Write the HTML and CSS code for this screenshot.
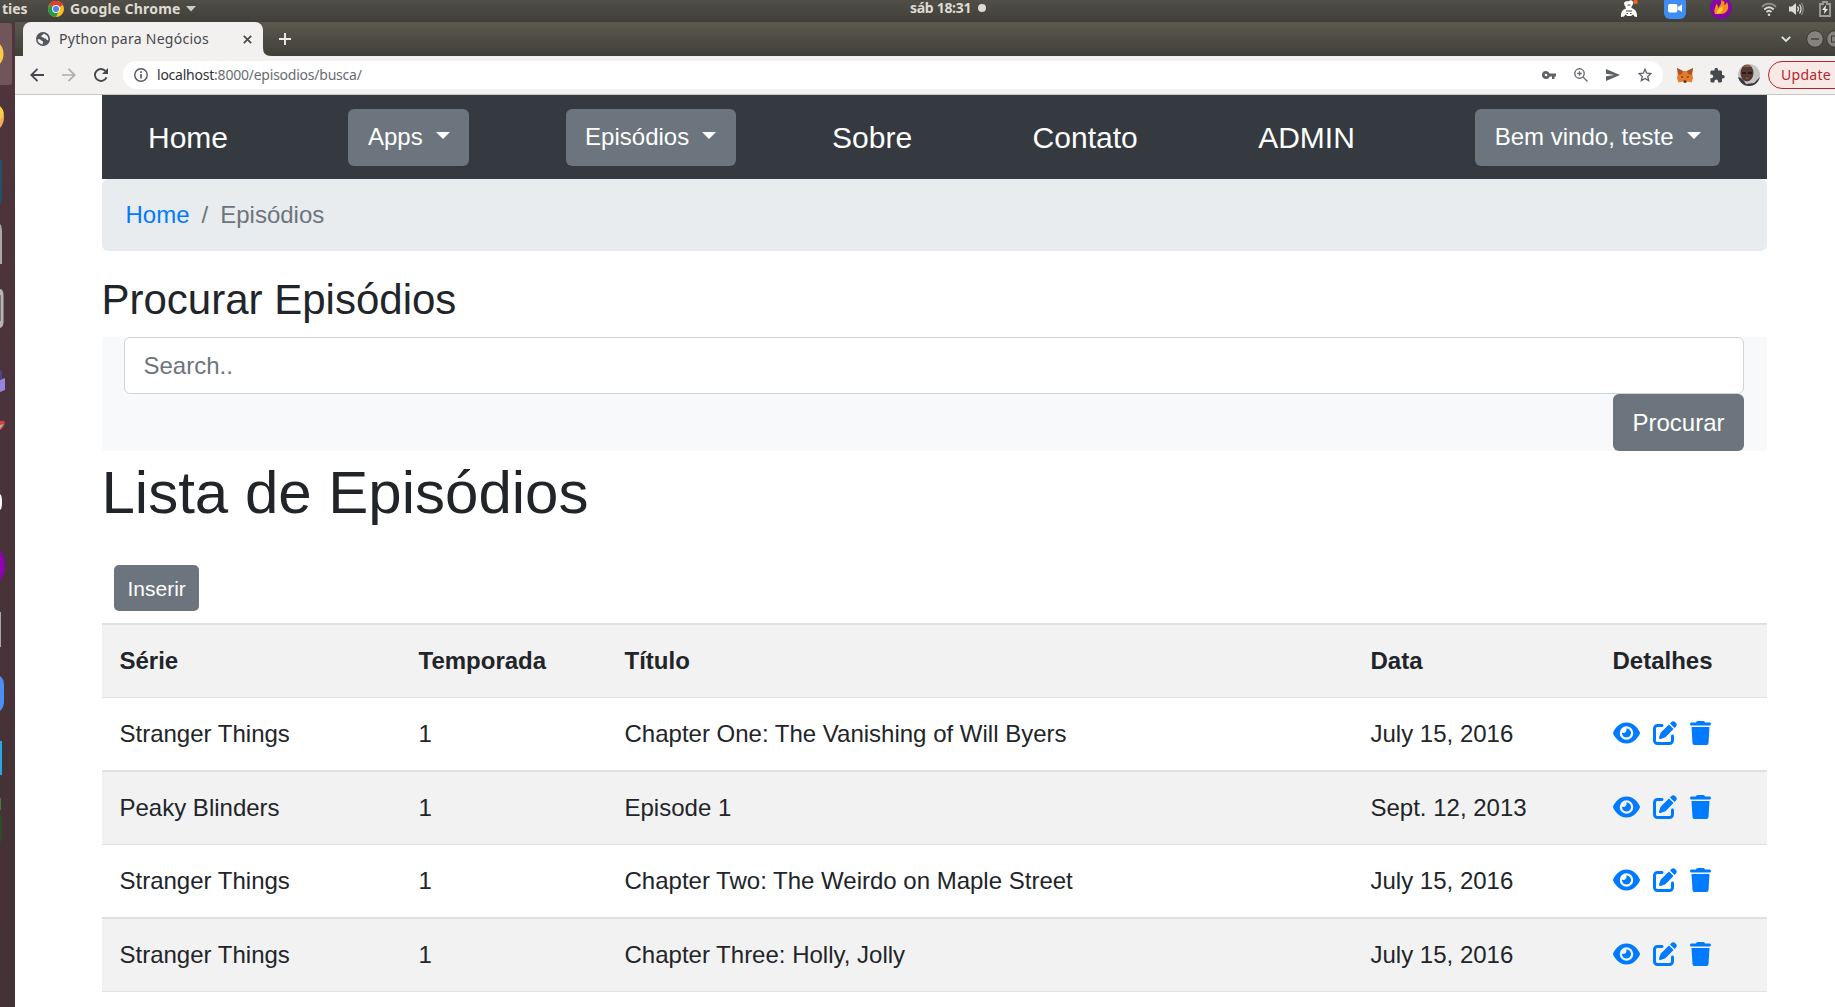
FILE: index.html
```html
<!DOCTYPE html>
<html lang="pt-br">
<head>
<meta charset="utf-8">
<title>Python para Negócios</title>
<link rel="stylesheet" href="styles.css">
</head>
<body>
<svg class="defs" width="0" height="0" aria-hidden="true">
  <symbol id="eye" viewBox="0 0 576 512"><path d="M288 32c-80.8 0-145.5 36.8-192.6 80.6C48.6 156 17.3 208 2.5 243.7c-3.3 7.9-3.3 16.7 0 24.6C17.3 304 48.6 356 95.4 399.4C142.5 443.2 207.2 480 288 480s145.5-36.8 192.6-80.6c46.8-43.5 78.1-95.4 93-131.1c3.3-7.9 3.3-16.7 0-24.6c-14.9-35.7-46.2-87.7-93-131.1C433.5 68.8 368.8 32 288 32zM144 256a144 144 0 1 1 288 0 144 144 0 1 1 -288 0zm144-64c0 35.3-28.7 64-64 64c-7.1 0-13.9-1.2-20.3-3.3c-5.5-1.8-11.9 1.6-11.7 7.4c.3 6.9 1.3 13.8 3.2 20.7c13.7 51.2 66.4 81.6 117.6 67.9s81.6-66.4 67.9-117.6c-11.1-41.5-47.8-69.4-88.6-71.1c-5.8-.2-9.2 6.1-7.4 11.7c2.1 6.4 3.3 13.2 3.3 20.3z"/></symbol>
  <symbol id="edit" viewBox="0 0 512 512"><path d="M471.6 21.7c-21.9-21.9-57.3-21.9-79.2 0L362.3 51.7l97.9 97.9 30.1-30.1c21.9-21.9 21.9-57.3 0-79.2L471.6 21.7zm-299.2 220c-6.1 6.1-10.8 13.6-13.5 21.9l-29.6 88.8c-2.9 8.6-.6 18.1 5.8 24.6s15.9 8.7 24.6 5.8l88.8-29.6c8.2-2.7 15.7-7.4 21.9-13.5L437.7 172.3 339.7 74.3 172.4 241.7zM96 64C43 64 0 107 0 160V416c0 53 43 96 96 96H352c53 0 96-43 96-96V320c0-17.7-14.3-32-32-32s-32 14.3-32 32v96c0 17.7-14.3 32-32 32H96c-17.7 0-32-14.3-32-32V160c0-17.7 14.3-32 32-32h96c17.7 0 32-14.3 32-32s-14.3-32-32-32H96z"/></symbol>
  <symbol id="trash" viewBox="0 0 448 512"><path d="M135.2 17.7L128 32H32C14.3 32 0 46.3 0 64S14.3 96 32 96H416c17.7 0 32-14.3 32-32s-14.3-32-32-32H320l-7.2-14.3C307.4 6.8 296.3 0 284.2 0H163.8c-12.1 0-23.2 6.8-28.6 17.7zM416 128H32L53.2 467c1.6 25.3 22.6 45 47.9 45H346.9c25.3 0 46.3-19.7 47.9-45L416 128z"/></symbol>
</svg>

<header class="topbar">
  <div class="topbar-left">
    <span class="activities">ties</span>
    <svg class="chrome-logo" width="16" height="16" viewBox="0 0 16 16"><circle cx="8" cy="8" r="8" fill="#fbc116"/><path d="M8 8L1.1 4A8 8 0 0 1 14.9 4z" fill="#e33b2e"/><path d="M1.1 4A8 8 0 0 0 8 16L11 9.500 8 8z" fill="#269a48"/><circle cx="8" cy="8" r="4" fill="#f4f4f4"/><circle cx="8" cy="8" r="3" fill="#4a88e8"/></svg>
    <span class="app-name">Google Chrome</span>
    <svg width="10" height="6" viewBox="0 0 10 6"><path d="M0 0h10L5 5.500z" fill="#cfccc5"/></svg>
  </div>
  <div class="clock"><span>sáb 18:31</span><i class="dot"></i></div>
  <div class="tray">
    <svg width="18" height="18" viewBox="0 0 18 18"><path d="M4 3C6 0 8 2 9 1c2-2 5 0 4 3-.5 2-2 2-1.500 4C15 9 17.500 12 17 17l-2.500-.5-1.500-2-2 1.500H7.500l-2-1.500L4 16.500 1 17C.5 13 2 9.500 6 8.500 5 7.500 6 6 4.500 5.500z" fill="#fff"/><path d="M7.500 5h3M6 11h6M6.500 13.500h1.500M10 13.500h1.500" stroke="#45433d" fill="none"/><circle cx="15.500" cy="2" r="2.300" fill="#e8622c"/></svg>
    <svg width="22" height="19" viewBox="0 0 22 19"><rect y="-4" width="22" height="23" rx="6" fill="#3f8cf3"/><rect x="4" y="4" width="9.500" height="8.500" rx="2" fill="#fff"/><path d="M14 7l4-2.500v7.500l-4-2.500z" fill="#fff"/></svg>
    <svg width="22" height="19" viewBox="0 0 22 19"><circle cx="11" cy="8" r="11" fill="#8208a5"/><path d="M5 14C3 10 6 7 6 4c2 1 2 2 2 4 2-2 4-5 3-8 4 1 4 3 3 5 1 0 2-1 3-3 3 6 0 12-6 12z" fill="#fb8a1c"/><path d="M7 14c-1-4 3-5 5-8 2 3 0 7-5 8z" fill="#ffd52c"/></svg>
    <svg class="wifi" width="16" height="15" viewBox="0 0 16 15" fill="none" stroke="#dedcd6" stroke-width="1.800"><path d="M1 5c4-4.500 10-4.500 14 0" opacity=".5"/><path d="M3.300 7.500c3-3 6.500-3 9.400 0"/><path d="M5.500 10c1.600-1.500 3.500-1.500 5 0"/><circle cx="8" cy="12.700" r="1.300" fill="#dedcd6" stroke="none"/></svg>
    <svg width="15" height="14" viewBox="0 0 15 14"><path d="M0 4.500h3L7 1v12L3 9.500H0z" fill="#dedcd6"/><path d="M8.500 4.500q2 2.500 0 5M10.500 2.500q3 4.500 0 9" stroke="#dedcd6" stroke-width="1.300" fill="none"/><path d="M12.500 1q3.500 6 0 12" stroke="#8b8983" stroke-width="1.300" fill="none"/></svg>
    <svg width="12" height="16" viewBox="0 0 12 16"><path d="M1 3h3V1h4v2h3v12H1z" fill="none" stroke="#a09e98" stroke-width="1.800"/><path d="M7 4L3 9h2.500L5 13l4-5H6.500z" fill="#eceae5"/></svg>
  </div>
</header>

<div class="desktop">
  <aside class="launcher">
    <svg width="15" height="985" viewBox="0 0 15 985">
      <rect x="-6" y="1" width="18" height="62" rx="3" fill="#70565b"/>
      <ellipse cx="-7" cy="32" rx="10.500" ry="13" fill="#fbc943"/>
      <ellipse cx="-7" cy="95" rx="11" ry="14" fill="#f9a85b"/><ellipse cx="-7" cy="91" rx="10.500" ry="9" fill="#fdd245"/>
      <path d="M0 136l2 3v36q0 6-2 8z" fill="#24506b"/>
      <path d="M0 202q2 2 2 8v32H0z" fill="#aaa"/>
      <path d="M0 267q3.500 0 3.500 7v26q0 5-3.500 6z" fill="#b5b5b3"/><path d="M0 273h1v26H0z" fill="#777"/>
      <path d="M0 348l2 1v8H0z" fill="#4c448e"/><path d="M0 358l5-2v12l-5 2z" fill="#9784df"/>
      <path d="M0 399q4-1 5 1-1 6-5 8z" fill="#d33f42"/><path d="M0 403l4-1-4 5z" fill="#a7b29a"/>
      <path d="M0 472q2 1 2 8t-2 8z" fill="#fff"/>
      <path d="M0 529q5 3 5 14t-5 15z" fill="#8c02ad"/>
      <path d="M0 590h1v35H0z" fill="#aaa5a8"/>
      <path d="M0 654q4 3 4 9v16q0 7-4 10z" fill="#4a90f4"/>
      <path d="M0 719h2v34H0z" fill="#25a8e8"/>
      <path d="M0 776h1v12H0z" fill="#438036"/><path d="M0 793h1.500v22l-1.500 8z" fill="#275322"/>
    </svg>
  </aside>

  <div class="browser">
    <div class="tabstrip">
      <div class="tab">
        <svg class="globe" width="14" height="14" viewBox="0 0 14 14"><circle cx="7" cy="7" r="7" fill="#53565c"/><path d="M1.500 7.500c2-.5 3 .2 3.800 1 .9.900 2 .6 1.800 2L6.500 12.500C3.500 12 1.800 10 1.500 7.500zM7.500 1.800c-.2 1.500-2.300 1.200-2.200 2.500s2 .8 2.700 1.800c.6.800 2 .2 2.300 1.200.3 1 1.200 1 2 .7.300-3.500-2-5.800-4.800-6.200z" fill="#f2f1f0"/></svg>
        <span class="tab-title">Python para Negócios</span>
        <svg class="tab-close" width="9" height="9" viewBox="0 0 9 9"><path d="M.8.8l7.400 7.400M8.200.8L.8 8.200" stroke="#45484c" stroke-width="1.700"/></svg>
      </div>
      <svg class="tab-foot" width="8" height="8" viewBox="0 0 8 8"><path d="M0 0q0 8 8 8H0z" fill="#f2f1f0"/></svg>
      <svg class="new-tab" width="12" height="12" viewBox="0 0 12 12"><path d="M6 0v12M0 6h12" stroke="#eceae6" stroke-width="1.900"/></svg>
      <div class="window-controls">
        <svg width="10" height="7" viewBox="0 0 10 7"><path d="M.8.8L5 5l4.200-4.200" fill="none" stroke="#e4e2dd" stroke-width="1.900"/></svg>
        <svg width="29" height="18" viewBox="0 0 29 18"><circle cx="9" cy="9" r="8.300" fill="#85827b" stroke="#393732"/><path d="M5 9h8" stroke="#3c3a35" stroke-width="1.300"/><circle cx="29" cy="9" r="8.300" fill="#85827b" stroke="#393732"/><rect x="25.500" y="6" width="7" height="6" fill="none" stroke="#3c3a35"/></svg>
      </div>
    </div>

    <div class="toolbar">
      <div class="nav-icons">
        <svg width="14" height="14" viewBox="0 0 14 14"><path d="M14 7H1.500M7.500.8L1.300 7l6.200 6.200" fill="none" stroke="#45484c" stroke-width="1.800"/></svg>
        <svg width="14" height="14" viewBox="0 0 14 14"><path d="M0 7h12.500M6.500.8L12.700 7l-6.200 6.200" fill="none" stroke="#adadad" stroke-width="1.700"/></svg>
        <svg width="15" height="14" viewBox="0 0 15 14"><path d="M12.500 9.300A6 6 0 1 1 11.500 3" fill="none" stroke="#45484c" stroke-width="1.900"/><path d="M14 0v6H8z" fill="#45484c"/></svg>
      </div>
      <div class="omnibox">
        <svg width="14" height="14" viewBox="0 0 14 14"><circle cx="7" cy="7" r="6.200" fill="none" stroke="#53565c" stroke-width="1.400"/><path d="M7 6v4.500M7 3.300v1.600" stroke="#53565c" stroke-width="1.600"/></svg>
        <span class="url"><b>localhost</b>:8000/episodios/busca/</span>
        <div class="omni-icons">
          <svg width="14" height="14" viewBox="0 0 14 14"><path d="M4 3a4 4 0 1 0 3.700 5.400H10V11h2.500V8.400H14V5.600H7.700A4 4 0 0 0 4 3zm0 2.700a1.300 1.300 0 1 1 0 2.600 1.300 1.300 0 0 1 0-2.600z" fill="#5f6368" fill-rule="evenodd"/></svg>
          <svg width="14" height="14" viewBox="0 0 14 14" fill="none" stroke="#6b6e72" stroke-width="1.400"><circle cx="5.500" cy="5.500" r="4.700"/><path d="M9 9l4.500 4.500M3.200 5.500h4.600M5.500 3.200v4.600"/></svg>
          <svg width="14" height="12" viewBox="0 0 14 12"><path d="M0 0l14 6L0 12V7.300L8.500 6 0 4.700z" fill="#5f6368"/></svg>
          <svg width="14" height="14" viewBox="0 0 14 14"><path d="M7 1.200l1.700 4 4.300.4-3.300 2.800 1 4.200L7 10.400l-3.700 2.200 1-4.200L1 5.600l4.300-.4z" fill="none" stroke="#5f6368" stroke-width="1.300"/></svg>
        </div>
      </div>
      <svg class="fox" width="16" height="15" viewBox="0 0 16 15"><path d="M0 0l6 3h4l6-3-.7 6 .7 4-1.500 4.500-4-1L9 15H7l-1.500-1.500-4 1L0 10l.7-4z" fill="#e57d2d"/><path d="M0 0l6 3-1 3-3.500 1zM16 0l-6 3 1 3 3.500 1z" fill="#a6542b"/><path d="M4 8l2.500 1L5 10zM12 8L9.500 9 11 10zM6.500 12.500h3L9 14.500H7z" fill="#3a2c28"/></svg>
      <svg class="puzzle" width="15" height="15" viewBox="0 0 15 15"><path d="M13 7h-1V4c0-.8-.6-1.400-1.400-1.400H8v-.9a1.700 1.700 0 0 0-3.500 0v.9H1.800C1 2.600.4 3.200.4 4v2.500h1a1.800 1.800 0 0 1 0 3.700h-1V13c0 .8.600 1.400 1.400 1.400h2.600v-1a1.800 1.800 0 0 1 3.700 0v1h2.500c.8 0 1.400-.6 1.400-1.400v-2.600h1A1.700 1.700 0 0 0 13 7z" fill="#45484c"/></svg>
      <svg class="avatar" width="22" height="22" viewBox="0 0 22 22"><defs><clipPath id="av"><circle cx="11" cy="11" r="11"/></clipPath></defs><g clip-path="url(#av)"><path d="M0 0h22v22H0z" fill="#c8c4bf"/><path d="M0 13q5 1 8 7l8-1 6-6v9H0z" fill="#343942"/><ellipse cx="9" cy="9" rx="6.500" ry="8.500" fill="#563830"/><path d="M5 3q4-4 9 0z" fill="#8a6758"/><path d="M4 8h4v2H4zM10 8h4v2h-4z" fill="#221c1c"/><path d="M7 14q2-1 4 0l-2 1z" fill="#8a6458"/></g></svg>
      <div class="update">Update</div>
    </div>

    <main class="page">
      <nav class="navbar">
        <a class="nav-link">Home</a>
        <button class="btn dropdown">Apps</button>
        <button class="btn dropdown">Episódios</button>
        <a class="nav-link">Sobre</a>
        <a class="nav-link">Contato</a>
        <a class="nav-link">ADMIN</a>
        <button class="btn dropdown">Bem vindo, teste</button>
      </nav>
      <div class="breadcrumb"><a>Home</a><span>/</span><span>Episódios</span></div>
      <h3>Procurar Episódios</h3>
      <form class="search">
        <input type="text" placeholder="Search..">
        <button type="button" class="btn">Procurar</button>
      </form>
      <h1>Lista de Episódios</h1>
      <button class="btn btn-sm">Inserir</button>
      <table>
        <colgroup><col class="c-serie"><col class="c-temp"><col class="c-titulo"><col class="c-data"><col class="c-det"></colgroup>
        <tr><th>Série</th><th>Temporada</th><th>Título</th><th>Data</th><th>Detalhes</th></tr>
        <tr><td>Stranger Things</td><td>1</td><td>Chapter One: The Vanishing of Will Byers</td><td>July 15, 2016</td><td><div class="actions"><svg width="27" height="24"><use href="#eye"/></svg><svg width="24" height="24"><use href="#edit"/></svg><svg width="21" height="24"><use href="#trash"/></svg></div></td></tr>
        <tr><td>Peaky Blinders</td><td>1</td><td>Episode 1</td><td>Sept. 12, 2013</td><td><div class="actions"><svg width="27" height="24"><use href="#eye"/></svg><svg width="24" height="24"><use href="#edit"/></svg><svg width="21" height="24"><use href="#trash"/></svg></div></td></tr>
        <tr><td>Stranger Things</td><td>1</td><td>Chapter Two: The Weirdo on Maple Street</td><td>July 15, 2016</td><td><div class="actions"><svg width="27" height="24"><use href="#eye"/></svg><svg width="24" height="24"><use href="#edit"/></svg><svg width="21" height="24"><use href="#trash"/></svg></div></td></tr>
        <tr class="last"><td>Stranger Things</td><td>1</td><td>Chapter Three: Holly, Jolly</td><td>July 15, 2016</td><td><div class="actions"><svg width="27" height="24"><use href="#eye"/></svg><svg width="24" height="24"><use href="#edit"/></svg><svg width="21" height="24"><use href="#trash"/></svg></div></td></tr>
      </table>
    </main>
  </div>
</div>
</body>
</html>
```
FILE: styles.css
```css
* { box-sizing: border-box; }
body {
  margin: 0;
  width: 1835px;
  height: 1007px;
  overflow: hidden;
  background: #fff;
  color: #212529;
  font-family: "Liberation Sans", Arial, sans-serif;
}
svg { display: block; flex: none; }
.defs { position: absolute; }

/* system bar */
.topbar {
  height: 22px;
  display: grid;
  grid-template-columns: 910px 1fr auto;
  align-items: center;
  background: linear-gradient(#504e47, #403f3a);
  color: #dfdbd2;
  font: bold 14px/16px "Noto Sans", "Open Sans", sans-serif;
  white-space: nowrap;
}
.topbar-left { display: flex; align-items: center; height: 16px; margin-bottom: 5px; }
.activities { width: 48px; padding-left: 2px; }
.chrome-logo { margin-right: 6px; }
.app-name { width: 110px; margin-right: 6px; letter-spacing: .25px; }
.clock { display: flex; align-items: center; gap: 5px; margin-bottom: 6px; }
.clock span { width: 63px; letter-spacing: -.3px; }
.dot { width: 8px; height: 8px; border-radius: 50%; background: #dfdbd2; }
.tray { display: flex; align-items: center; height: 18px; padding-right: 4px; margin-bottom: 4px; }
.tray svg { margin-left: 15px; }
.tray svg:nth-child(2) { margin-left: 26px; }
.tray svg:nth-child(3) { margin-left: 24px; }
.tray svg.wifi { margin-left: 29px; }
.tray svg:nth-child(5) { margin-left: 12px; }

.desktop { display: flex; height: 985px; }
.launcher { flex: none; width: 15px; background: linear-gradient(#50353b, #49333a 45%, #433236); }
.browser { flex: 1; min-width: 0; display: flex; flex-direction: column; }

/* browser chrome */
.tabstrip {
  flex: none;
  height: 34px;
  display: flex;
  align-items: center;
  padding-left: 8px;
  background: linear-gradient(#5b594f, #403f39);
}
.tab {
  display: flex;
  align-items: center;
  width: 240px;
  height: 34px;
  padding: 0 11px 0 13px;
  border-radius: 8px 8px 0 0;
  background: #f2f1f0;
}
.globe { margin-right: 9px; }
.tab-title { flex: 1; font: 14px/20px "Noto Sans", sans-serif; color: #45484c; letter-spacing: .27px; white-space: nowrap; }
.tab-foot { align-self: flex-end; }
.new-tab { margin-left: 8px; }
.window-controls { display: flex; align-items: center; gap: 15px; margin-left: auto; }
.toolbar {
  flex: none;
  height: 39px;
  display: flex;
  align-items: center;
  padding-left: 15px;
  background: #f2f1f0;
  border-bottom: 1px solid #c9c8c6;
  overflow: hidden;
}
.nav-icons { flex: none; display: flex; gap: 18px; width: 93px; }
.omnibox {
  flex: none;
  width: 1540px;
  height: 28px;
  display: flex;
  align-items: center;
  padding: 0 11px;
  border-radius: 14px;
  background: #fff;
}
.url { flex: 1; margin-left: 9px; color: #696c70; font: 14px/20px "Noto Sans", sans-serif; letter-spacing: -.23px; }
.url b { font-weight: 400; color: #303236; }
.omni-icons { display: flex; align-items: center; gap: 18px; }
.fox { margin-left: 14px; }
.puzzle { margin-left: 17px; }
.avatar { margin-left: 13px; }
.update {
  flex: none;
  width: 90px;
  height: 28px;
  margin-left: 8px;
  padding-left: 12px;
  border: 1px solid #b3262e;
  border-radius: 14px;
  background: #f8e9e7;
  color: #b3262e;
  font: 14px/25px "Noto Sans", sans-serif;
  letter-spacing: .3px;
}

/* page */
.page { width: 1665px; margin-left: 87px; }
.navbar {
  height: 84px;
  display: flex;
  align-items: center;
  justify-content: space-between;
  padding: 0 47px 0 46px;
  background: #343a40;
}
.nav-link { color: #fff; font-size: 30px; line-height: 45px; margin-right: 24px; }
.btn {
  height: 57px;
  padding: 0 19.5px;
  border: 0;
  border-radius: 6px;
  background: #6c757d;
  color: #fff;
  font: 24px/36px "Liberation Sans", Arial, sans-serif;
}
.dropdown { display: flex; align-items: center; }
.dropdown::after {
  content: "";
  margin: -4px 0 0 13px;
  border: 7.2px solid transparent;
  border-top-color: #fff;
  border-bottom: 0;
}
.breadcrumb {
  height: 72px;
  display: flex;
  gap: 12px;
  padding: 18px 23.5px;
  border-radius: 6px;
  background: #e9ecef;
  color: #6c757d;
  font-size: 24px;
  line-height: 36px;
}
.breadcrumb a { color: #007bff; }
h3 { margin: 24px 0 12px -.5px; font-size: 42px; font-weight: 400; line-height: 50px; }
.search {
  display: flex;
  flex-direction: column;
  align-items: flex-end;
  padding: 0 23px 0 22px;
  background: #f8f9fa;
}
.search input {
  width: 100%;
  height: 57px;
  padding: 0 18.5px;
  border: 1px solid #ced4da;
  border-radius: 6px;
  font: 24px/36px "Liberation Sans", Arial, sans-serif;
}
.search input::placeholder { color: #6c757d; opacity: 1; }
h1 { margin: 6px 0 0 -.5px; font-size: 60px; font-weight: 400; line-height: 72px; }
.btn-sm { display: block; height: 46px; margin: 36px 0 12px 12px; padding: 2px 13.5px 0; border-radius: 5px; font-size: 21px; }
table { width: 1665px; table-layout: fixed; border-collapse: separate; border-spacing: 0; font-size: 24px; line-height: 36px; }
.c-serie { width: 299px; }
.c-temp { width: 206px; }
.c-titulo { width: 746px; }
.c-data { width: 242px; }
.c-det { width: 172px; }
th, td { padding: 18px 17.5px; border-top: 1px solid #dee2e6; text-align: left; white-space: nowrap; }
tr:nth-child(odd) > * { background: #f2f2f2; border-top: 2px solid #dee0e3; }
.last td { border-bottom: 1px solid #dee2e6; }
.actions { display: flex; align-items: center; gap: 13px; height: 36px; padding-bottom: 2px; fill: #007bff; }
```
